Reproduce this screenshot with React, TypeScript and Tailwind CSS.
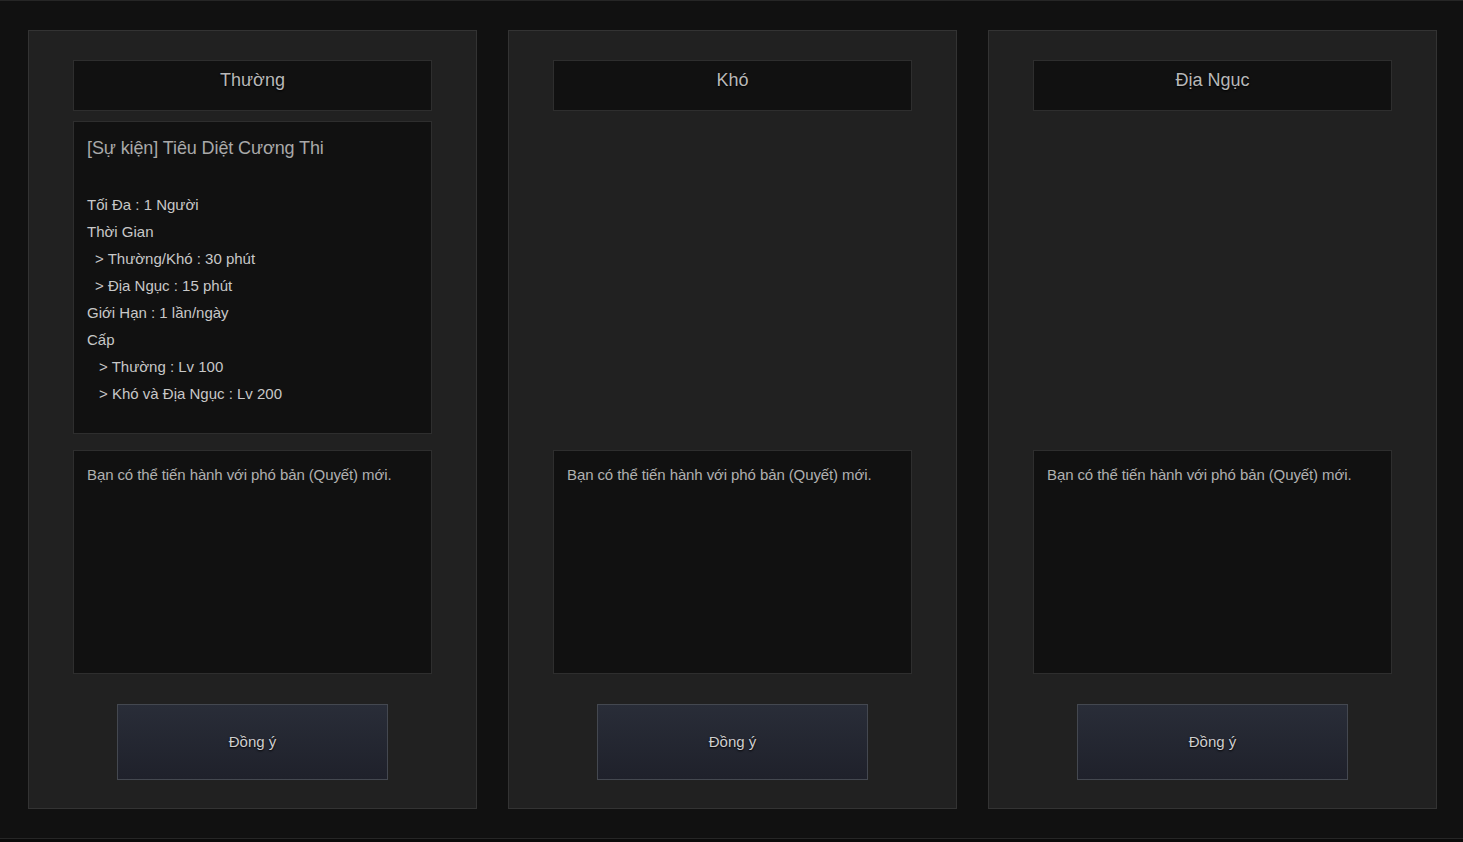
import React from "react";

interface Column {
  title: string;
  info?: boolean;
}

const columns: Column[] = [
  { title: "Thường", info: true },
  { title: "Khó" },
  { title: "Địa Ngục" },
];

const infoLines = [
  { text: "Tối Đa : 1 Người", pad: "pl-0" },
  { text: "Thời Gian", pad: "pl-0" },
  { text: "> Thường/Khó : 30 phút", pad: "pl-[8px]" },
  { text: "> Địa Ngục : 15 phút", pad: "pl-[8px]" },
  { text: "Giới Hạn : 1 lần/ngày", pad: "pl-0" },
  { text: "Cấp", pad: "pl-0" },
  { text: "> Thường : Lv 100", pad: "pl-[12px]" },
  { text: "> Khó và Địa Ngục : Lv 200", pad: "pl-[12px]" },
];

const ModeColumn = ({ col }: { col: Column }) => {
  return (
    <div className="w-[449px] h-[779px] border border-[#333] bg-[#212121] flex flex-col pt-[29px] px-[44px]">
      <div className="h-[51px] border border-[#2e2e2e] bg-[#111] flex justify-center pt-[6px] text-[18px] text-[#b8b8b8] [text-shadow:0_1px_2px_#000]">
        {col.title}
      </div>
      {col.info ? (
        <div className="mt-[10px] h-[313px] border border-[#2e2e2e] bg-[#111] px-[13px] pt-[14px]">
          <div className="text-[18px] text-[#a9a9a9] leading-[24px] tracking-[-0.1px]">
            [Sự kiện] Tiêu Diệt Cương Thi
          </div>
          <div className="mt-[31px] flex flex-col text-[15px] text-[#c8c8c8] leading-[27px]">
            {infoLines.map((l) => (
              <div key={l.text} className={l.pad}>
                {l.text}
              </div>
            ))}
          </div>
        </div>
      ) : (
        <div className="mt-[10px] h-[313px]" />
      )}
      <div className="mt-[16px] h-[224px] border border-[#2e2e2e] bg-[#111] px-[13px] pt-[14px] text-[15px] text-[#b0b0b0] leading-[20px] tracking-[-0.1px]">
        Bạn có thể tiến hành với phó bản (Quyết) mới.
      </div>
      <div className="flex justify-center mt-[30px]">
        <button className="w-[271px] h-[76px] border border-[#444850] bg-gradient-to-b from-[#292d38] to-[#1f212b] text-[15px] text-[#cfcfcf] [text-shadow:0_1px_2px_#000]">
          Đồng ý
        </button>
      </div>
    </div>
  );
};

export default function App() {
  return (
    <div className="w-[1463px] h-[842px] bg-[#111] border-t border-[#262626] font-['Liberation_Sans',Arial,sans-serif] flex flex-col">
      <div className="flex gap-[31px] pl-[28px] pt-[29px]">
        {columns.map((c) => (
          <ModeColumn key={c.title} col={c} />
        ))}
      </div>
      <div className="mt-auto h-[4px] border-t border-[#262626] bg-[#0b0b0b]" />
    </div>
  );
}
